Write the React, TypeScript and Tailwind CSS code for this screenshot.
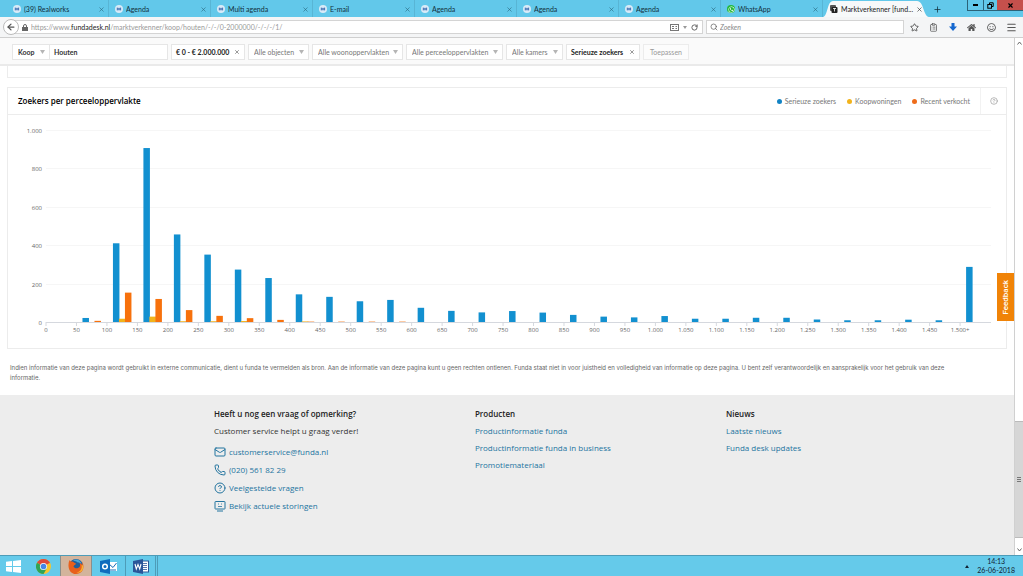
import type { ReactNode } from 'react'
import {
  ArrowLeft,
  CircleHelp,
  ClipboardList,
  Mail,
  Menu,
  Phone,
  Plus,
  RotateCw,
  Search,
  Star,
  X,
} from 'lucide-react'
import { FaHome, FaRegSmile, FaWhatsapp } from 'react-icons/fa'

const TABS = ['(39) Realworks', 'Agenda', 'Multi agenda', 'E-mail', 'Agenda', 'Agenda', 'Agenda']

// zoekers, koopwoningen, verkocht per 50 m2
const DATA: [number, number, number][] = [
  [0, 0, 0],
  [21, 0, 6],
  [410, 17, 153],
  [906, 28, 120],
  [456, 4, 62],
  [351, 4, 32],
  [273, 5, 20],
  [229, 0, 11],
  [144, 3, 2],
  [131, 0, 2],
  [108, 0, 2],
  [115, 0, 2],
  [74, 0, 0],
  [58, 0, 0],
  [50, 0, 0],
  [57, 0, 0],
  [49, 0, 0],
  [37, 0, 0],
  [28, 0, 0],
  [24, 0, 0],
  [31, 0, 0],
  [17, 0, 0],
  [17, 0, 0],
  [22, 0, 0],
  [22, 0, 0],
  [13, 0, 0],
  [9, 0, 0],
  [9, 0, 0],
  [12, 0, 0],
  [9, 0, 0],
  [287, 0, 0],
]

const COLORS = ['#1290d0', '#f2b31b', '#f7710c']

export default function App() {
  return (
    <div className="flex min-h-screen flex-col bg-white font-['Lato',sans-serif] text-[#333]">
      <TabBar />
      <AddressBar />
      <div className="flex flex-1">
        <main className="relative flex min-w-0 flex-1 flex-col">
          <FilterBar />
          <div className="mx-[7px] h-3 border-x border-b border-[#ececec]" />
          <ChartCard />
          <p className="px-2.5 pt-3.5 pb-3 font-['Inter',sans-serif] text-[6px] leading-[10px] text-[#666]">
            Indien informatie van deze pagina wordt gebruikt in externe communicatie, dient u funda te
            vermelden als bron. Aan de informatie van deze pagina kunt u geen rechten ontlenen. Funda
            staat niet in voor juistheid en volledigheid van informatie op deze pagina. U bent zelf
            verantwoordelijk en aansprakelijk voor het gebruik van deze
            <br />
            informatie.
          </p>
          <Footer />
          <button className="absolute top-[235px] right-0 flex h-12 w-[17px] items-center justify-center bg-[#f08307] text-white">
            <span className="rotate-180 font-['Roboto',sans-serif] text-[8px] font-medium [writing-mode:vertical-rl]">
              Feedback
            </span>
          </button>
        </main>
        <Scrollbar />
      </div>
      <Taskbar />
    </div>
  )
}

function TabBar() {
  return (
    <header className="flex h-[17px] bg-[#62c8ea] pl-[7px] text-[7px] text-[#12303c]">
      {TABS.map((title, i) => (
        <Tab key={i} title={title} icon={<RealworksIcon />} />
      ))}
      <Tab
        title="WhatsApp"
        icon={
          <span className="flex h-2 w-2 items-center justify-center rounded-full bg-[#25b93c] text-white">
            <FaWhatsapp size={7} />
          </span>
        }
      />
      <div className="relative flex w-[106px] shrink-0 items-center gap-[3px] pt-px pr-2 pl-[7px] text-[#222]">
        <svg
          className="absolute inset-0 h-full w-full"
          viewBox="0 0 106 17"
          preserveAspectRatio="none"
        >
          <path d="M0 17 C5 16 4 1 10 1 H94 C101 1 100 16 106 17 Z" fill="#f7f9fa" />
        </svg>
        <svg className="relative h-2 w-2 shrink-0" viewBox="0 0 8 8">
          <rect x="0" y="0" width="6" height="6" rx="1" fill="#555" />
          <rect x="1.5" y="2" width="6" height="6" rx="1" fill="#222" />
          <path d="M3 3.5h3M4.5 3.5v3" stroke="#fff" strokeWidth="0.8" />
        </svg>
        <span className="relative flex-1 whitespace-nowrap">Marktverkenner [fund...</span>
        <button aria-label="Tabblad sluiten" className="relative">
          <X size={7} />
        </button>
      </div>
      <button aria-label="Nieuw tabblad" className="ml-1 pt-px">
        <Plus size={9} />
      </button>
      <div className="ml-auto flex h-[11px] border-b border-l border-[#2b6378] text-black">
        <button aria-label="Minimaliseren" className="flex w-[15px] items-center justify-center">
          <span className="h-0.5 w-[5px] bg-black" />
        </button>
        <button
          aria-label="Verkleinen"
          className="flex w-[14px] items-center justify-center border-l border-[#2b6378]"
        >
          <svg width="7" height="7" viewBox="0 0 7 7" fill="none" stroke="#000">
            <path d="M2.5 2V.8H6.2V4.5H5" />
            <rect x="0.8" y="2.5" width="3.7" height="3.7" />
          </svg>
        </button>
        <button
          aria-label="Sluiten"
          className="flex w-[26px] items-center justify-center bg-[#c5504c]"
        >
          <X size={7} strokeWidth={4} />
        </button>
      </div>
    </header>
  )
}

function Tab({ title, icon }: { title: string; icon: ReactNode }) {
  return (
    <div className="flex min-w-0 shrink basis-[102px] items-center gap-[3px] border-r border-[#58b5d5] pt-px pr-[3px] pl-1.5">
      {icon}
      <span className="flex-1 truncate">{title}</span>
      <button aria-label="Tabblad sluiten" className="text-[#28647a]">
        <X size={7} />
      </button>
    </div>
  )
}

function RealworksIcon() {
  return (
    <svg className="h-2 w-2 shrink-0" viewBox="0 0 8 8">
      <circle cx="4" cy="4" r="4" fill="#d9ebf8" />
      <path d="M2.3 2.6v2.8M2.3 4h3.2M4 2.8v2.6M5.6 2.6v2.8" stroke="#3565ad" strokeWidth="0.9" />
    </svg>
  )
}

function AddressBar() {
  return (
    <nav className="flex h-[21px] items-center border-b border-[#cfcfcf] bg-[#f4f5f6] pl-[3px] text-[#555]">
      <button
        aria-label="Terug"
        className="z-10 flex h-4 w-4 shrink-0 items-center justify-center rounded-full border border-[#bbb] bg-white"
      >
        <ArrowLeft size={10} strokeWidth={3} />
      </button>
      <div className="-ml-1 flex h-[14px] min-w-0 flex-1 items-center border border-[#d4d4d4] bg-white pr-1 pl-1.5">
        <svg className="shrink-0" width="6" height="7" viewBox="0 0 6 7">
          <path d="M1.500 3V2a1.500 1.500 0 0 1 3 0v1" stroke="#666" fill="none" />
          <rect y="3" width="6" height="4" fill="#666" />
        </svg>
        <span className="ml-[3px] flex-1 truncate text-[7px] text-[#999]">
          https://www.<span className="text-[#222]">fundadesk.nl</span>
          /marktverkenner/koop/houten/-/-/0-2000000/-/-/-/1/
        </span>
        <svg width="9" height="7" viewBox="0 0 9 7" fill="none" stroke="#777">
          <rect x="0.5" y="0.5" width="8" height="6" />
          <path d="M2 2.5h2M2 4.5h2M5.5 2.5h1.5M5.5 4.5h1.5" />
        </svg>
        <svg className="mx-1" width="4" height="3" viewBox="0 0 4 3">
          <path d="M0 0h4L2 3z" fill="#999" />
        </svg>
        <button aria-label="Vernieuwen">
          <RotateCw size={7} strokeWidth={3} />
        </button>
      </div>
      <label className="ml-[3px] flex h-[14px] w-[198px] shrink-0 items-center border border-[#d4d4d4] bg-white pl-[3px]">
        <Search size={8} strokeWidth={2} />
        <input
          type="search"
          aria-label="Zoeken"
          placeholder="Zoeken"
          className="ml-0.5 min-w-0 flex-1 text-[7px] italic outline-none placeholder:text-[#888]"
        />
      </label>
      <div className="flex w-[119px] shrink-0 items-center justify-between px-1.5">
        <button aria-label="Bladwijzer">
          <Star size={9} strokeWidth={2.5} />
        </button>
        <button aria-label="Klembord">
          <ClipboardList size={9} strokeWidth={2} />
        </button>
        <button aria-label="Downloads" className="text-[#1668cf]">
          <svg width="8" height="8" viewBox="0 0 8 8">
            <path d="M2.500 0h3v3.500H8L4 8 0 3.500h2.500z" fill="currentColor" />
          </svg>
        </button>
        <button aria-label="Startpagina">
          <FaHome size={9} />
        </button>
        <button aria-label="Chat">
          <FaRegSmile size={9} />
        </button>
        <button aria-label="Menu">
          <Menu size={11} strokeWidth={2.5} />
        </button>
      </div>
    </nav>
  )
}

function FilterBar() {
  return (
    <form className="flex h-7 items-center gap-[3px] border-b-2 border-[#eaeaea] bg-[#fafafa] pt-0.5 pl-3 text-[7px]">
      <div className="flex">
        <FilterSelect label="Koop" width="w-[38px]" dark />
        <input
          aria-label="Plaats"
          defaultValue="Houten"
          className="h-4 w-[118px] border border-l-0 border-[#e6e6e6] bg-white pl-1 font-bold text-[#333] outline-none"
        />
      </div>
      <FilterChip label="€ 0 - € 2.000.000" width="w-[74px]" />
      <FilterSelect label="Alle objecten" width="w-[61px]" />
      <FilterSelect label="Alle woonoppervlakten" width="w-[91px]" />
      <FilterSelect label="Alle perceeloppervlakten" width="w-[97px]" />
      <FilterSelect label="Alle kamers" width="w-[57px]" />
      <FilterChip label="Serieuze zoekers" width="w-[74px]" />
      <button
        type="button"
        className="h-4 w-[46px] border border-[#ececec] bg-[#fcfcfc] text-[#999]"
      >
        Toepassen
      </button>
    </form>
  )
}

function FilterSelect({ label, width, dark }: { label: string; width: string; dark?: boolean }) {
  return (
    <div className={`relative h-4 ${width}`}>
      <select
        aria-label={label}
        className={`h-full w-full appearance-none border border-[#e6e6e6] bg-white pl-[5px] outline-none ${
          dark ? 'font-bold text-[#333]' : 'text-[#777]'
        }`}
      >
        <option>{label}</option>
      </select>
      <svg
        className="pointer-events-none absolute top-1.5 right-[5px]"
        width="5"
        height="4"
        viewBox="0 0 5 4"
      >
        <path d="M0 0h5L2.500 4z" fill="#b5b5b5" />
      </svg>
    </div>
  )
}

function FilterChip({ label, width }: { label: string; width: string }) {
  return (
    <button
      type="button"
      className={`flex h-4 items-center justify-between border border-[#e6e6e6] bg-white px-1 font-bold text-[#222] ${width}`}
    >
      <span className="whitespace-nowrap">{label}</span>
      <X size={6} strokeWidth={3} className="shrink-0 text-[#777]" />
    </button>
  )
}

function ChartCard() {
  return (
    <section className="mx-[7px] mt-[9px] border border-[#ececec]">
      <div className="flex h-[27px] items-center border-b border-[#ececec] pl-2.5">
        <h2 className="flex-1 font-['Open_Sans',sans-serif] text-[8px] font-semibold text-black">
          Zoekers per perceeloppervlakte
        </h2>
        <ul className="flex gap-[11px] pr-2.5 text-[7px] text-[#777]">
          <Legend dot="bg-[#1283c4]" label="Serieuze zoekers" />
          <Legend dot="bg-[#f2b31b]" label="Koopwoningen" />
          <Legend dot="bg-[#ee6c1a]" label="Recent verkocht" />
        </ul>
        <button
          aria-label="Uitleg"
          className="flex h-full w-[26px] items-center justify-center border-l border-[#f2f2f2] text-[#999]"
        >
          <CircleHelp size={8} />
        </button>
      </div>
      <BarChart />
    </section>
  )
}

function Legend({ dot, label }: { dot: string; label: string }) {
  return (
    <li className="flex items-center gap-[3px]">
      <span className={`h-[5px] w-[5px] rounded-full ${dot}`} />
      {label}
    </li>
  )
}

const LEFT = 38
const BASE = 207
const STEP = 30.47
const SCALE = 0.192

function formatNumber(n: number) {
  return String(n).replace(/(\d)(\d{3})$/, '$1.$2')
}

function BarChart() {
  return (
    <svg
      viewBox="0 0 998 233"
      className="block w-full font-['Open_Sans',sans-serif]"
      fontSize="6"
      fill="#666"
    >
      {[0, 200, 400, 600, 800, 1000].map((v) => {
        const y = Math.round(BASE - v * SCALE) + 0.5
        return (
          <g key={v}>
            <path d={`M${LEFT} ${y}H983`} stroke={v ? '#f6f6f6' : '#d5d8de'} />
            <text x="34" y={y + 2} textAnchor="end">
              {formatNumber(v)}
            </text>
          </g>
        )
      })}
      {DATA.map((row, i) => {
        const x = LEFT + i * STEP
        return (
          <g key={i}>
            <path d={`M${x} ${BASE}v4`} stroke="#d5d8de" />
            <text x={x} y="217" textAnchor="middle">
              {formatNumber(i * 50)}
              {i === 30 && '+'}
            </text>
            {row.map(
              (v, s) =>
                v > 0 && (
                  <rect
                    key={s}
                    x={x + 6 + s * 6}
                    y={BASE - v * SCALE}
                    width="6.500"
                    height={v * SCALE}
                    fill={COLORS[s]}
                  />
                ),
            )}
          </g>
        )
      })}
    </svg>
  )
}

function Footer() {
  return (
    <footer className="grid flex-1 grid-cols-[261fr_251fr_288fr] bg-[#ededed] pt-2.5 pl-[21.1%] font-['Open_Sans',sans-serif] text-[8px] leading-[17px]">
      <div>
        <h3 className="font-semibold text-[#222]">Heeft u nog een vraag of opmerking?</h3>
        <p>Customer service helpt u graag verder!</p>
        <ul className="mt-1 leading-[18px] text-[#23749f]">
          <ContactLink icon={<Mail size={12} />} label="customerservice@funda.nl" />
          <ContactLink icon={<Phone size={12} />} label="(020) 561 82 29" />
          <ContactLink icon={<CircleHelp size={12} />} label="Veelgestelde vragen" />
          <ContactLink icon={<StatusIcon />} label="Bekijk actuele storingen" />
        </ul>
      </div>
      <LinkColumn
        title="Producten"
        links={['Productinformatie funda', 'Productinformatie funda in business', 'Promotiemateriaal']}
      />
      <LinkColumn title="Nieuws" links={['Laatste nieuws', 'Funda desk updates']} />
    </footer>
  )
}

function StatusIcon() {
  return (
    <svg width="12" height="12" viewBox="0 0 12 12" fill="none" stroke="currentColor">
      <rect x="1" y="1.500" width="10" height="7.500" rx="0.5" />
      <path d="M3 11h6" />
      <path d="M4 4h1M7 4h1M4 6.500h4" strokeWidth="0.8" />
    </svg>
  )
}

function ContactLink({ icon, label }: { icon: ReactNode; label: string }) {
  return (
    <li>
      <a href="#" className="flex items-center gap-[3px]">
        {icon}
        {label}
      </a>
    </li>
  )
}

function LinkColumn({ title, links }: { title: string; links: string[] }) {
  return (
    <div>
      <h3 className="font-semibold text-[#222]">{title}</h3>
      <ul className="text-[#23749f]">
        {links.map((link) => (
          <li key={link}>
            <a href="#">{link}</a>
          </li>
        ))}
      </ul>
    </div>
  )
}

function Scrollbar() {
  return (
    <div className="flex w-[9px] shrink-0 flex-col items-center border-l border-[#d0d0d0] bg-white">
      <svg className="mt-[3px]" width="5" height="4" viewBox="0 0 5 4">
        <path d="M.5 3.500L2.500 1l2 2.500" stroke="#666" fill="none" />
      </svg>
      <div className="flex-1" />
      <div className="flex h-[117px] w-full flex-col items-center justify-center gap-px border-y border-[#bbb] bg-[#d6d6d6]">
        <span className="h-px w-1 bg-[#777]" />
        <span className="h-px w-1 bg-[#777]" />
        <span className="h-px w-1 bg-[#777]" />
      </div>
      <svg className="mt-2.5 mb-[3px]" width="5" height="4" viewBox="0 0 5 4">
        <path d="M.5.500L2.500 3l2-2.500" stroke="#666" fill="none" />
      </svg>
    </div>
  )
}

function Taskbar() {
  return (
    <footer className="flex h-[21px] border-t border-[#4d9cb8] bg-[#65caea] text-[#123]">
      <button aria-label="Start" className="flex w-[26px] items-center justify-center">
        <svg width="15" height="13" viewBox="0 0 15 13" fill="#fff">
          <path d="M0 1.800L6 1v5H0zM7 .9L15 0v6H7zM0 7h6v5L0 11.200zM7 7h8v6L7 12.100z" />
        </svg>
      </button>
      <button aria-label="Chrome" className="flex w-[34px] items-center justify-center">
        <svg width="15" height="15" viewBox="0 0 16 16">
          <circle cx="8" cy="8" r="8" fill="#f6c62d" />
          <path d="M8 8L1.070 4A8 8 0 0 1 14.930 4z" fill="#de4a3c" />
          <path d="M8 8L1.070 4A8 8 0 0 0 8 16l3.500-6z" fill="#2fa455" />
          <circle cx="8" cy="8" r="3.800" fill="#fff" />
          <circle cx="8" cy="8" r="3" fill="#4587e8" />
        </svg>
      </button>
      <button
        aria-label="Firefox"
        className="flex w-8 items-center justify-center border-x border-[#8a8f8c] bg-[#d3b49c]"
      >
        <svg width="16" height="16" viewBox="0 0 16 16">
          <circle cx="8" cy="8" r="7" fill="#215f9b" />
          <path d="M5 2.500C8 0 13 2 13.500 6c-2-2-4-1-5-2.500z" fill="#4aa6d8" />
          <path
            d="M1.500 2c.5 1 1.500 1.500 3 1.500C6 4 6 5 8 5.500 7.500 7 6 7 5.500 8.500c1 2 4 2.500 6 .5 1-1.500.5-3 0-4 2 .5 2.500 1 2.700 2.500.5-1.500 0-3-.7-4.500C17 7 16 16 8 16 1 16-1 8 1.500 2z"
            fill="#e8601c"
          />
          <path d="M13.500 7c1 3-1 7-5 7.500C13 15.500 16 12 15 7.500z" fill="#f9b233" />
        </svg>
      </button>
      <button
        aria-label="Outlook"
        className="flex w-[34px] items-center justify-center border-r border-[#4d9cb8]"
      >
        <svg width="17" height="15" viewBox="0 0 17 15">
          <rect x="8" y="3" width="9" height="9" fill="#fff" />
          <path d="M9 5l4 3.500L16.500 4M9 11h7" stroke="#1a6db8" fill="none" />
          <path d="M0 2l10-2v15L0 13z" fill="#0f6cbd" />
          <circle cx="5" cy="7.500" r="2.300" fill="none" stroke="#fff" strokeWidth="1.500" />
        </svg>
      </button>
      <button
        aria-label="Word"
        className="flex w-[30px] items-center justify-center border-r border-[#4d9cb8]"
      >
        <svg width="16" height="15" viewBox="0 0 16 15">
          <rect x="8.500" y="2" width="7" height="11" fill="#fff" stroke="#2a5699" />
          <path d="M10 4.500h4M10 6.500h4M10 8.500h4M10 10.500h4" stroke="#2a5699" strokeWidth="0.8" />
          <path d="M0 2l10-2v15L0 13z" fill="#2a5699" />
          <path d="M2 5l1.300 5L5 5.500 6.700 10 8 5" stroke="#fff" strokeWidth="1.100" fill="none" />
        </svg>
      </button>
      <div className="w-0.5 border-r border-[#4d9cb8]" />
      <div className="ml-auto flex items-center gap-2 pr-2">
        <svg width="4" height="3" viewBox="0 0 4 3">
          <path d="M0 3h4L2 0z" fill="#123" />
        </svg>
        <div className="text-center text-[7px] leading-[9px]">
          <div>14:13</div>
          <div>26-06-2018</div>
        </div>
      </div>
    </footer>
  )
}
